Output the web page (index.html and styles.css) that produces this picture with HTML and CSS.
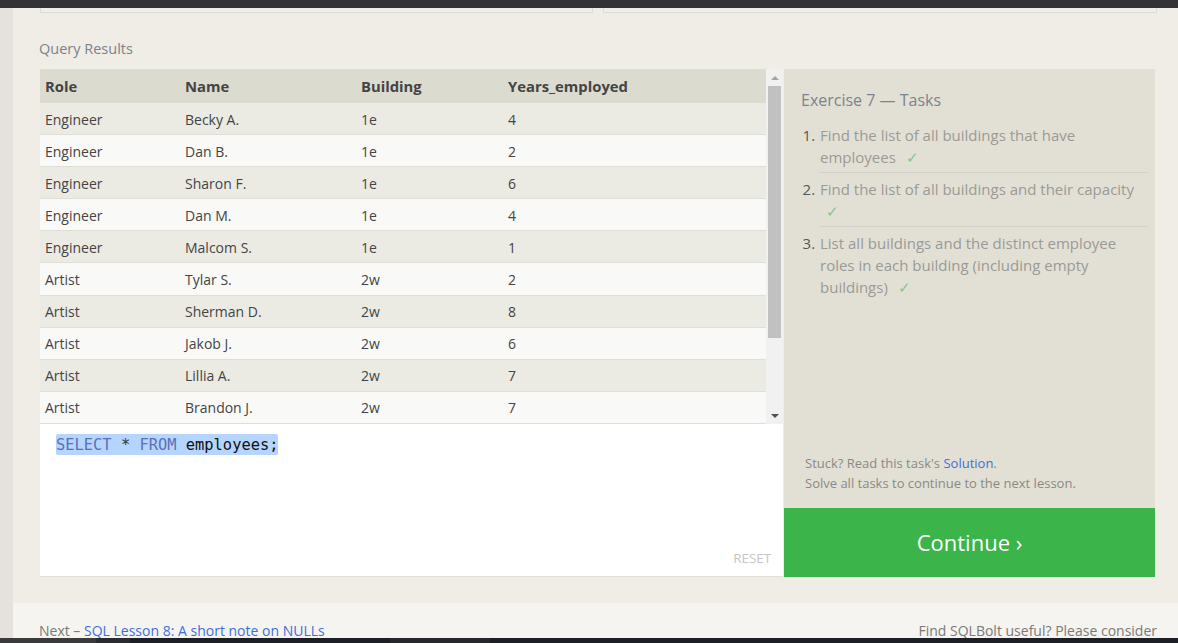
FILE: index.html
```html
<!DOCTYPE html>
<html lang="en">
<head>
<meta charset="utf-8">
<title>SQLBolt - Exercise 7</title>
<link rel="stylesheet" href="styles.css">
</head>
<body>
<div class="topbar"></div>
<div class="page">
  <div class="leftstrip"></div>
  <div class="main">
    <section class="lesson">
      <div class="prev">
        <div class="prev-box prev-a"></div>
        <div class="prev-box prev-b"></div>
      </div>
      <div class="results-label">Query Results</div>
      <div class="exercise">
        <div class="work">
          <div class="results">
            <table class="grid">
              <thead>
                <tr><th class="c1">Role</th><th class="c2">Name</th><th class="c3">Building</th><th class="c4">Years_employed</th></tr>
              </thead>
              <tbody>
                <tr><td>Engineer</td><td>Becky A.</td><td>1e</td><td>4</td></tr>
                <tr><td>Engineer</td><td>Dan B.</td><td>1e</td><td>2</td></tr>
                <tr><td>Engineer</td><td>Sharon F.</td><td>1e</td><td>6</td></tr>
                <tr><td>Engineer</td><td>Dan M.</td><td>1e</td><td>4</td></tr>
                <tr><td>Engineer</td><td>Malcom S.</td><td>1e</td><td>1</td></tr>
                <tr><td>Artist</td><td>Tylar S.</td><td>2w</td><td>2</td></tr>
                <tr><td>Artist</td><td>Sherman D.</td><td>2w</td><td>8</td></tr>
                <tr><td>Artist</td><td>Jakob J.</td><td>2w</td><td>6</td></tr>
                <tr><td>Artist</td><td>Lillia A.</td><td>2w</td><td>7</td></tr>
                <tr><td>Artist</td><td>Brandon J.</td><td>2w</td><td>7</td></tr>
              </tbody>
            </table>
            <div class="scrollbar">
              <div class="arrow arrow-up"></div>
              <div class="thumb"></div>
              <div class="track-rest"></div>
              <div class="arrow arrow-down"></div>
            </div>
          </div>
          <div class="editor">
            <div class="code"><span class="sel"><span class="kw">SELECT</span> <span class="op">*</span> <span class="kw">FROM</span> employees;</span></div>
            <div class="reset">RESET</div>
          </div>
        </div>
        <aside class="tasks">
          <div class="tasks-top">
            <h3 class="tasks-title">Exercise 7 — Tasks</h3>
            <ol class="task-list">
              <li>Find the list of all buildings that have employees <span class="check">✓</span></li>
              <li>Find the list of all buildings and their capacity <span class="check">✓</span></li>
              <li>List all buildings and the distinct employee roles in each building (including empty buildings) <span class="check">✓</span></li>
            </ol>
          </div>
          <div class="stuck">
            <div>Stuck? Read this task's <a class="link" href="#">Solution</a>.</div>
            <div>Solve all tasks to continue to the next lesson.</div>
          </div>
          <button class="continue">Continue ›</button>
        </aside>
      </div>
    </section>
    <footer class="footer">
      <div>Next – <a class="link" href="#">SQL Lesson 8: A short note on NULLs</a></div>
      <div>Find SQLBolt useful? Please consider</div>
    </footer>
  </div>
</div>
<div class="bottombar">
  <div class="bb-a"></div>
  <div class="bb-b"></div>
  <div class="bb-c"></div>
</div>
</body>
</html>
```
FILE: styles.css
```css
html, body {
  margin: 0;
  padding: 0;
}
body {
  width: 1178px;
  height: 643px;
  overflow: hidden;
  font-family: "Open Sans", "Noto Sans", sans-serif;
  background: #efede6;
  color: #444;
}
.topbar {
  height: 8px;
  background: #323337;
}
.page {
  display: flex;
  height: 630px;
}
.leftstrip {
  width: 13px;
  background: #e5e2dd;
}
.main {
  flex: 1;
  display: flex;
  flex-direction: column;
}
.lesson {
  background: #efede6;
  padding: 0 23px 26px 27px;
  height: 569px;
}
.prev {
  display: flex;
  height: 5px;
}
.prev-box {
  height: 4px;
  border: 1px solid #dedbd2;
  border-top: none;
  background: #f0eee8;
}
.prev-a { width: 551px; }
.prev-b { flex: 1; margin-left: 10px; margin-right: -2px; }

.results-label {
  margin-top: 26px;
  margin-left: -1px;
  font-size: 14.5px;
  line-height: 20px;
  color: #7c828c;
}
.exercise {
  margin-top: 10px;
  display: flex;
  gap: 1px;
  height: 508px;
}
.work {
  width: 743px;
  display: flex;
  flex-direction: column;
}
.results {
  display: flex;
  height: 355px;
  overflow: hidden;
}
.grid {
  width: 726px;
  border-collapse: collapse;
  table-layout: fixed;
  font-size: 14px;
  color: #444;
}
.grid th {
  height: 34px;
  padding: 0 0 0 5px;
  text-align: left;
  font-weight: 700;
  font-size: 14.8px;
  background: #dbdbd0;
  color: #444;
}
.grid .c1 { width: 135px; }
.grid .c2 { width: 171px; }
.grid .c3 { width: 142px; }
.grid td {
  height: 30px;
  padding: 1px 0 0 5px;
  border-bottom: 1px solid #dfdfd6;
}
.grid tbody tr:nth-child(odd) td { background: #ebebe4; }
.grid tbody tr:nth-child(even) td { background: #f9f9f7; }

.scrollbar {
  width: 17px;
  background: #f1f1f1;
  display: flex;
  flex-direction: column;
  align-items: center;
}
.arrow {
  width: 17px;
  height: 17px;
  display: flex;
  align-items: center;
  justify-content: center;
}
.arrow::before {
  content: "";
  width: 0;
  height: 0;
  border-left: 4px solid transparent;
  border-right: 4px solid transparent;
}
.arrow-up::before { border-bottom: 4px solid #a3a3a3; }
.arrow-down::before { border-top: 4px solid #505050; }
.thumb {
  width: 13px;
  height: 252px;
  background: #c1c1c1;
}
.track-rest { flex: 1; }

.editor {
  flex: 1;
  background: #fff;
  border-bottom: 1px solid #e2dfd7;
  display: flex;
  flex-direction: column;
}
.code {
  padding: 10px 0 0 16px;
  font-family: "DejaVu Sans Mono", "Liberation Mono", monospace;
  font-size: 15.4px;
  line-height: 19px;
}
.sel {
  display: inline-block;
  background: #b5d5fe;
  border-radius: 2px;
  color: #111;
  line-height: 20px;
  padding-top: 1px;
}
.kw { color: #5a71b6; }
.op { color: #333; }
.reset {
  margin-top: auto;
  align-self: flex-end;
  padding: 0 12px 9px 0;
  font-size: 13.5px;
  line-height: 18px;
  color: #c6c6c6;
  letter-spacing: -0.1px;
}

.tasks {
  flex: 1;
  display: flex;
  flex-direction: column;
  background: #e2e0d5;
}
.tasks-top {
  flex: 1;
  padding: 20px 7px 0 17px;
}
.tasks-title {
  margin: 0;
  font-size: 16px;
  line-height: 22px;
  font-weight: 400;
  color: #7c838e;
}
.task-list {
  margin: 8px 0 0 0;
  padding: 0 0 0 18px;
  font-size: 15px;
  line-height: 22px;
  color: #9b9a96;
}
.task-list li {
  padding: 5px 0 4px 1px;
  border-bottom: 1px solid #d4d2c8;
}
.task-list li:last-child { border-bottom: none; }
.task-list li::marker { color: #555; }
.check {
  display: inline-block;
  margin-left: 6px;
  color: #7dc98b;
}
.stuck {
  padding: 0 21px 15px 21px;
  font-size: 13px;
  line-height: 20px;
  color: #8a8985;
}
.link {
  color: #3d6fdb;
  text-decoration: none;
}
.continue {
  height: 69px;
  border: none;
  margin: 0;
  padding: 0 0 2px 0;
  background: #3bb44a;
  color: #fff;
  font-family: "Open Sans", "Noto Sans", sans-serif;
  font-size: 22px;
  cursor: pointer;
}

.footer {
  height: 35px;
  overflow: hidden;
  background: #f5f4f0;
  padding: 18px 21px 0 26px;
  box-sizing: border-box;
  display: flex;
  justify-content: space-between;
  font-size: 14px;
  line-height: 20px;
  color: #7a7a7a;
}
.bottombar {
  height: 5px;
  display: flex;
  background: #1c1f26;
}
.bb-a { width: 96px; background: #3a3a3c; }
.bb-b { width: 34px; background: #2a2b30; }
.bb-c { width: 100px; margin-left: 260px; background: #25272d; }
```
